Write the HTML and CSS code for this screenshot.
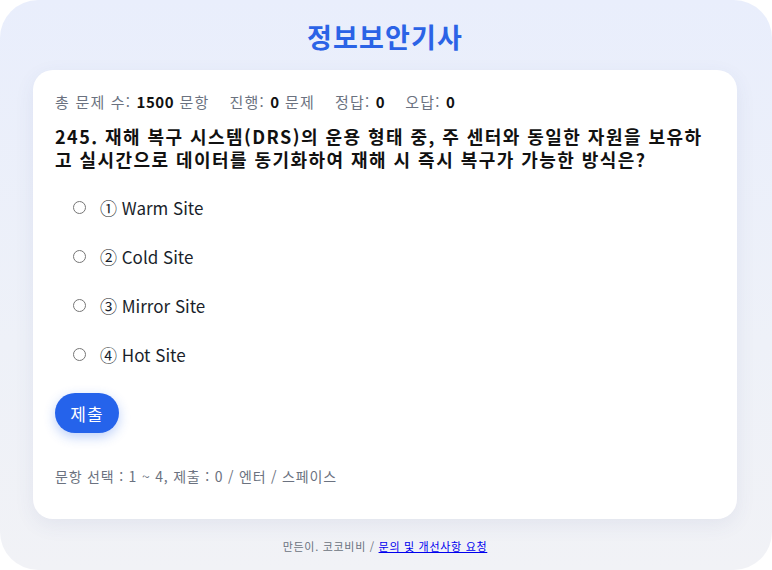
FILE: index.html
```html
<!DOCTYPE html>
<html lang="ko">
<head>
<meta charset="utf-8">
<title>정보보안기사</title>
<link rel="stylesheet" href="styles.css">
</head>
<body>
<div class="page">
  <h1 class="title">정보보안기사</h1>
  <main class="card">
    <div class="stats">
      <span>총 문제 수: <b>1500</b> 문항</span>
      <span>진행: <b>0</b> 문제</span>
      <span>정답: <b>0</b></span>
      <span>오답: <b>0</b></span>
    </div>
    <div class="question">245. 재해 복구 시스템(DRS)의 운용 형태 중, 주 센터와 동일한 자원을 보유하고 실시간으로 데이터를 동기화하여 재해 시 즉시 복구가 가능한 방식은?</div>
    <ul class="options">
      <li><label class="option"><input type="radio" name="a" class="radio"><span>① Warm Site</span></label></li>
      <li><label class="option"><input type="radio" name="a" class="radio"><span>② Cold Site</span></label></li>
      <li><label class="option"><input type="radio" name="a" class="radio"><span>③ Mirror Site</span></label></li>
      <li><label class="option"><input type="radio" name="a" class="radio"><span>④ Hot Site</span></label></li>
    </ul>
    <button class="submit">제출</button>
    <div class="hint">문항 선택 : 1 ~ 4, 제출 : 0 / 엔터 / 스페이스</div>
  </main>
  <footer class="footer">만든이. 코코비비 / <a href="#" class="link">문의 및 개선사항 요청</a></footer>
</div>
</body>
</html>
```
FILE: styles.css
```css
* { box-sizing: border-box; }
html, body { margin: 0; padding: 0; background: #ffffff; }
body {
  font-family: "Noto Sans CJK KR", "Noto Sans", sans-serif;
  color: #111111;
}
.page {
  height: 570px;
  border-radius: 38px;
  background: linear-gradient(180deg, #e9eefc 0%, #eef1f8 60%, #f1f2f6 100%);
  padding: 19px 35px 0 33px;
  display: flex;
  flex-direction: column;
}
.title {
  margin: 0;
  text-align: center;
  font-size: 27px;
  line-height: 35px;
  font-weight: 700;
  color: #2b63e6;
  letter-spacing: 1.2px;
}
.card {
  margin-top: 16px;
  background: #ffffff;
  border-radius: 20px;
  padding: 21px 22px 33px;
  box-shadow: 0 6px 20px rgba(60, 80, 140, 0.08);
}
.stats {
  display: flex;
  gap: 20px;
  font-size: 15px;
  line-height: 22px;
  color: #6b7280;
  letter-spacing: 1.2px;
}
.stats b { color: #111111; font-weight: 700; letter-spacing: 0.5px; }
.question {
  margin-top: 12px;
  font-size: 18px;
  line-height: 23px;
  font-weight: 700;
  color: #111111;
  letter-spacing: 1.45px;
}
.options {
  list-style: none;
  margin: 12px 0 0;
  padding: 0;
}
.option {
  display: flex;
  align-items: center;
  height: 49px;
  padding-left: 18px;
  font-size: 17px;
  color: #1a1f2b;
}
.radio {
  margin: 0 14px 0 0;
  width: 13px;
  height: 13px;
}
.submit {
  display: block;
  margin-top: 14px;
  height: 40px;
  width: 64px;
  padding: 0;
  border: none;
  border-radius: 20px;
  background: #2563eb;
  color: #ffffff;
  font-family: inherit;
  font-size: 17px;
  letter-spacing: 1px;
  box-shadow: 0 4px 12px rgba(37, 99, 235, 0.3);
}
.hint {
  margin-top: 33px;
  font-size: 14px;
  line-height: 20px;
  color: #6b7280;
  letter-spacing: 0.8px;
}
.footer {
  margin-top: 18px;
  text-align: center;
  font-size: 11px;
  line-height: 18px;
  color: #6b7280;
  letter-spacing: 0.7px;
}
.link { color: #0000ee; }
```
